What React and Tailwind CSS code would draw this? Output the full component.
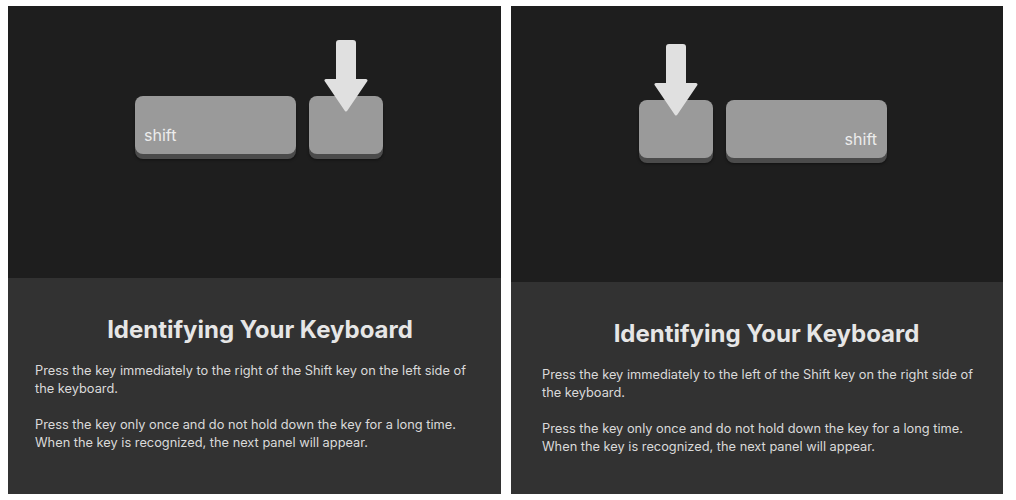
import React from "react";

function Arrow() {
  return (
    <svg width="44" height="72" viewBox="0 0 44 72" className="absolute left-1/2 -translate-x-1/2 -top-[56px]">
      <rect x="12" y="0" width="20" height="44" rx="3" fill="#e0e0e0" />
      <polygon points="2,40.5 42,40.5 22,70" fill="#e0e0e0" stroke="#e0e0e0" strokeWidth="3" strokeLinejoin="round" />
    </svg>
  );
}

function Key({ wide, label, align, arrow }) {
  return (
    <div
      className={`relative h-[58px] rounded-[8px] bg-[#9a9a9a] shadow-[0_5px_0_#4b4b4b,0_6px_3px_rgba(0,0,0,0.45)] flex items-end ${
        wide ? "w-[161px]" : "w-[74px]"
      } ${align === "right" ? "justify-end pr-[10px]" : "justify-start pl-[9px]"} pb-[10px]`}
    >
      {label && (
        <span className="text-[16px] leading-[18px] text-[#ececec] font-['Inter',sans-serif]">{label}</span>
      )}
      {arrow && <Arrow />}
    </div>
  );
}

function Panel({ width, topH, botH, keysPl, keysPt, side, text1, bodyPl, bodyPr }) {
  return (
    <div className="flex flex-col" style={{ width }}>
      <div className="bg-[#1e1e1e] flex flex-col" style={{ height: topH, paddingLeft: keysPl, paddingTop: keysPt }}>
        <div className="flex gap-[13px]">
          {side === "left" ? (
            <>
              <Key wide label="shift" align="left" />
              <Key arrow />
            </>
          ) : (
            <>
              <Key arrow />
              <Key wide label="shift" align="right" />
            </>
          )}
        </div>
      </div>
      <div className="bg-[#323232] flex flex-col pt-[37px]" style={{ height: botH, paddingLeft: bodyPl, paddingRight: bodyPr }}>
        <h1 className="text-center text-[24px] leading-[30px] font-bold text-[#e6e6e6] font-['Inter',sans-serif] pl-[8px]">
          Identifying Your Keyboard
        </h1>
        <div className="mt-[17px] text-[12.8px] leading-[18px] text-[#dadada] font-['Inter',sans-serif]">
          <p>{text1}</p>
          <p className="mt-[18px]">
            Press the key only once and do not hold down the key for a long time. When the key is recognized, the next panel will appear.
          </p>
        </div>
      </div>
    </div>
  );
}

export default function App() {
  return (
    <div className="w-[1016px] h-[500px] bg-white flex gap-[10px] pl-[8px] pt-[6px]">
      <Panel
        width={493}
        topH={272}
        botH={216}
        keysPl={127}
        keysPt={90}
        side="left"
        bodyPl={27}
        bodyPr={24}
        text1="Press the key immediately to the right of the Shift key on the left side of the keyboard."
      />
      <Panel
        width={492}
        topH={276}
        botH={212}
        keysPl={128}
        keysPt={94}
        side="right"
        bodyPl={31}
        bodyPr={20}
        text1="Press the key immediately to the left of the Shift key on the right side of the keyboard."
      />
    </div>
  );
}
